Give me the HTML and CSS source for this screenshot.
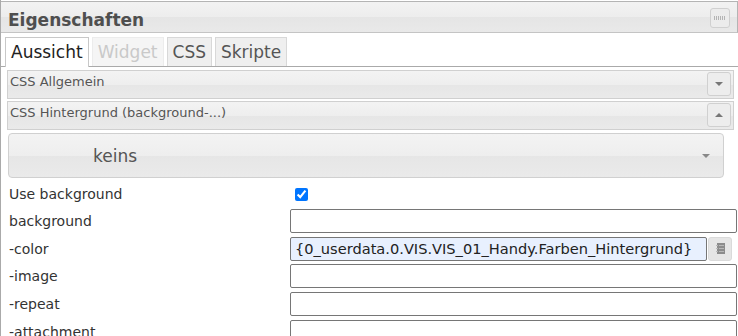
FILE: index.html
```html
<!DOCTYPE html>
<html lang="de">
<head>
  <meta charset="UTF-8">
  <meta name="viewport" content="width=device-width, initial-scale=1.0">
  <title>Eigenschaften</title>
  <link rel="stylesheet" href="styles.css">
</head>
<body>
  <div class="attr-panel">
    <!-- Titelzeile -->
    <div class="titlebar">
      <span class="title">Eigenschaften</span>
      <span class="title-btn">
        <svg width="12" height="4" viewBox="0 0 12 4">
          <g fill="#b4b4b4">
            <rect x="0" y="0" width="1" height="4"/>
            <rect x="2" y="0" width="1" height="4"/>
            <rect x="4" y="0" width="1" height="4"/>
            <rect x="6" y="0" width="1" height="4"/>
            <rect x="8" y="0" width="1" height="4"/>
            <rect x="10" y="0" width="1" height="4"/>
          </g>
        </svg>
      </span>
    </div>

    <!-- Reiter -->
    <div class="tabs">
      <span class="tab active">Aussicht</span>
      <span class="tab disabled">Widget</span>
      <span class="tab">CSS</span>
      <span class="tab">Skripte</span>
    </div>

    <div class="tab-body">
      <div class="group-head">
        <span class="group-title">CSS Allgemein</span>
        <span class="group-btn">
          <svg width="8" height="4" viewBox="0 0 8 4"><path d="M0 0h8L4 4z" fill="#777"/></svg>
        </span>
      </div>
      <div class="group-head">
        <span class="group-title">CSS Hintergrund (background-...)</span>
        <span class="group-btn">
          <svg width="8" height="4" viewBox="0 0 8 4"><path d="M0 4h8L4 0z" fill="#777"/></svg>
        </span>
      </div>

      <div class="select-box">
        <span class="select-text">keins</span>
        <svg width="8" height="4" viewBox="0 0 8 4"><path d="M0 0h8L4 4z" fill="#888"/></svg>
      </div>

      <div class="props">
        <div class="prop-row first">
          <span class="prop-label">Use background</span>
          <span class="prop-value"><input type="checkbox" class="check" checked></span>
        </div>
        <div class="prop-row">
          <span class="prop-label">background</span>
          <span class="prop-value"><input type="text" class="field"></span>
        </div>
        <div class="prop-row">
          <span class="prop-label">-color</span>
          <span class="prop-value with-btn">
            <input type="text" class="field filled" value="{0_userdata.0.VIS.VIS_01_Handy.Farben_Hintergrund}">
            <span class="pick-btn">
              <svg width="9" height="11" viewBox="0 0 9 11">
                <rect x="1" y="0" width="8" height="11" fill="#8c8c8c"/>
                <g fill="#b8b8b8">
                  <rect x="0" y="2" width="2" height="1"/>
                  <rect x="0" y="5" width="2" height="1"/>
                  <rect x="0" y="8" width="2" height="1"/>
                  <rect x="3" y="2" width="5" height="1"/>
                  <rect x="3" y="5" width="5" height="1"/>
                  <rect x="3" y="8" width="5" height="1"/>
                </g>
              </svg>
            </span>
          </span>
        </div>
        <div class="prop-row">
          <span class="prop-label">-image</span>
          <span class="prop-value"><input type="text" class="field"></span>
        </div>
        <div class="prop-row">
          <span class="prop-label">-repeat</span>
          <span class="prop-value"><input type="text" class="field"></span>
        </div>
        <div class="prop-row">
          <span class="prop-label">-attachment</span>
          <span class="prop-value"><input type="text" class="field"></span>
        </div>
      </div>
    </div>
  </div>
</body>
</html>
```

FILE: styles.css
```css
body {
  margin: 0;
  background: #fff;
  font-family: "DejaVu Sans", Verdana, sans-serif;
}

.attr-panel {
  width: 738px;
  height: 336px;
  box-sizing: border-box;
  border-left: 1px solid #aaa;
  overflow: hidden;
}

/* Titelzeile */
.titlebar {
  display: flex;
  align-items: flex-start;
  justify-content: space-between;
  height: 30px;
  margin-top: 1px;
  border-top: 1px solid #b4b4b4;
  border-bottom: 1px solid #c4c4c4;
  border-right: 1px solid #b4b4b4;
  background: linear-gradient(#f2f2f2 0%, #ededed 50%, #e5e5e5 51%, #e9e9e9 100%);
}
.titlebar .title {
  margin: 8px 0 0 7px;
  line-height: 20px;
  font-size: 17px;
  font-weight: bold;
  color: #4f4f4f;
}
.titlebar .title-btn {
  display: flex;
  align-items: center;
  justify-content: center;
  width: 18px;
  height: 18px;
  margin: 6px 7px 0 0;
  border: 1px solid #d0d0d0;
  border-radius: 3px;
  background: #ececec;
}

/* Reiter */
.tabs {
  display: flex;
  gap: 3px;
  padding: 4px 0 0 4px;
  border-bottom: 1px solid #aaa;
}
.tab {
  height: 28px;
  line-height: 28px;
  padding: 0 5px;
  font-size: 17px;
  color: #555;
  background: #efefef;
  border: 1px solid #d8d8d8;
  border-bottom: 0;
}
.tab.active {
  color: #222;
  background: #fff;
  border-color: #c8c8c8;
  margin-bottom: -1px;
  height: 29px;
}
.tab.disabled {
  color: #c9c9c9;
  background: #f5f5f5;
  border-color: #ececec;
}

.tab-body {
  padding: 3px 4px 0 6px;
}

/* Gruppen */
.group-head {
  display: flex;
  align-items: flex-start;
  height: 26px;
  margin-bottom: 2px;
  padding: 1px 2px 0 2px;
  border: 1px solid #d0d0d0;
  background: linear-gradient(#f3f3f3 0%, #eeeeee 50%, #e6e6e6 51%, #eaeaea 100%);
}
.group-title {
  padding-top: 1px;
  line-height: 17px;
  font-size: 13px;
  color: #555;
}
.group-btn {
  display: flex;
  align-items: center;
  justify-content: center;
  width: 22px;
  height: 22px;
  margin-left: auto;
  border: 1px solid #d0d0d0;
  border-radius: 3px;
  background: #ededed;
}

/* Auswahl */
.select-box {
  display: flex;
  align-items: center;
  height: 43px;
  margin: 3px 0 0 1px;
  padding: 0 13px 0 84px;
  box-sizing: content-box;
  width: 617px;
  border: 1px solid #d0d0d0;
  border-radius: 4px;
  background: linear-gradient(#f3f3f3 0%, #eeeeee 50%, #e6e6e6 51%, #eaeaea 100%);
}
.select-text {
  flex: 1;
  font-size: 17px;
  color: #555;
}

/* Eigenschaften */
.props {
  margin: 3px -3px 0 0;
}
.prop-row {
  display: grid;
  grid-template-columns: 283px 1fr;
  align-items: center;
  height: 27.75px;
}
.prop-row.first {
  height: 26px;
}
.prop-label {
  padding-left: 2px;
  font-size: 14px;
  color: #333;
}
.prop-value {
  display: flex;
  align-items: center;
}
.check {
  width: 13px;
  height: 13px;
  margin: 1px 0 0 5px;
}
.field {
  width: 100%;
  height: 24px;
  box-sizing: border-box;
  margin: 0;
  padding: 0 4px;
  border: 1px solid #767676;
  border-radius: 2px;
  font-family: "DejaVu Sans", Verdana, sans-serif;
  font-size: 14.6px;
  color: #222;
  background: #fff;
}
.field.filled {
  background: #e8f0fe;
}
.with-btn .field {
  flex: 1;
  width: auto;
}
.pick-btn {
  display: flex;
  align-items: center;
  justify-content: center;
  width: 22px;
  height: 22px;
  margin: 0 5px 0 1px;
  border: 1px solid #dadada;
  border-radius: 3px;
  background: #e6e6e6;
}
```
